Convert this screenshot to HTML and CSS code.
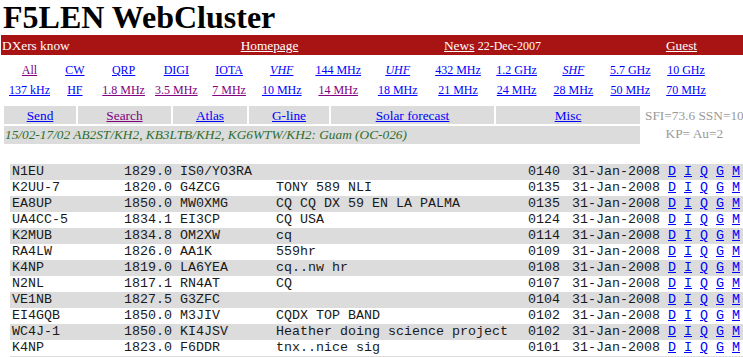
FILE: index.html
```html
<!DOCTYPE html>
<html lang="en">
<head>
<meta charset="utf-8">
<title>F5LEN WebCluster</title>
<link rel="stylesheet" href="styles.css">
</head>
<body>
<h1 class="title">F5LEN WebCluster</h1>

<div class="topbar">
  <div class="tb-cell tb-left">DXers know</div>
  <div class="tb-cell tb-center"><a href="#">Homepage</a></div>
  <div class="tb-cell tb-center"><a href="#">News</a> <span class="tb-date">22-Dec-2007</span></div>
  <div class="tb-cell tb-center"><a href="#">Guest</a></div>
</div>

<nav class="bands">
  <span class="band"><a class="visited" href="#">All</a></span>
  <span class="band"><a href="#">CW</a></span>
  <span class="band"><a href="#">QRP</a></span>
  <span class="band"><a href="#">DIGI</a></span>
  <span class="band"><a href="#">IOTA</a></span>
  <span class="band"><a class="it" href="#">VHF</a></span>
  <span class="band"><a href="#">144 MHz</a></span>
  <span class="band"><a class="it" href="#">UHF</a></span>
  <span class="band"><a href="#">432 MHz</a></span>
  <span class="band"><a href="#">1.2 GHz</a></span>
  <span class="band"><a class="it" href="#">SHF</a></span>
  <span class="band"><a href="#">5.7 GHz</a></span>
  <span class="band"><a href="#">10 GHz</a></span>

  <span class="band"><a href="#">137 kHz</a></span>
  <span class="band"><a href="#">HF</a></span>
  <span class="band"><a class="visited" href="#">1.8 MHz</a></span>
  <span class="band"><a class="visited" href="#">3.5 MHz</a></span>
  <span class="band"><a class="visited" href="#">7 MHz</a></span>
  <span class="band"><a href="#">10 MHz</a></span>
  <span class="band"><a class="visited" href="#">14 MHz</a></span>
  <span class="band"><a href="#">18 MHz</a></span>
  <span class="band"><a href="#">21 MHz</a></span>
  <span class="band"><a href="#">24 MHz</a></span>
  <span class="band"><a href="#">28 MHz</a></span>
  <span class="band"><a href="#">50 MHz</a></span>
  <span class="band"><a href="#">70 MHz</a></span>
</nav>

<div class="menu">
  <div class="menu-cell"><a href="#">Send</a></div>
  <div class="menu-cell"><a class="visited" href="#">Search</a></div>
  <div class="menu-cell"><a href="#">Atlas</a></div>
  <div class="menu-cell"><a href="#">G-line</a></div>
  <div class="menu-cell"><a href="#">Solar forecast</a></div>
  <div class="menu-cell"><a href="#">Misc</a></div>
  <div class="sfi">SFI=73.6 SSN=10<br>KP= Au=2</div>
  <div class="notice">15/02-17/02 AB2ST/KH2, KB3LTB/KH2, KG6WTW/KH2: Guam (OC-026)</div>
</div>

<div class="spots">
  <div class="spot"><span>N1EU</span><span>1829.0</span><span>IS0/YO3RA</span><span></span><span>0140</span><span>31-Jan-2008</span><span class="lk"><a href="#">D</a> <a href="#">I</a> <a href="#">Q</a> <a href="#">G</a> <a href="#">M</a></span></div>
  <div class="spot"><span>K2UU-7</span><span>1820.0</span><span>G4ZCG</span><span>TONY 589 NLI</span><span>0135</span><span>31-Jan-2008</span><span class="lk"><a href="#">D</a> <a href="#">I</a> <a href="#">Q</a> <a href="#">G</a> <a href="#">M</a></span></div>
  <div class="spot"><span>EA8UP</span><span>1850.0</span><span>MW0XMG</span><span>CQ CQ DX 59 EN LA PALMA</span><span>0135</span><span>31-Jan-2008</span><span class="lk"><a href="#">D</a> <a href="#">I</a> <a href="#">Q</a> <a href="#">G</a> <a href="#">M</a></span></div>
  <div class="spot"><span>UA4CC-5</span><span>1834.1</span><span>EI3CP</span><span>CQ USA</span><span>0124</span><span>31-Jan-2008</span><span class="lk"><a href="#">D</a> <a href="#">I</a> <a href="#">Q</a> <a href="#">G</a> <a href="#">M</a></span></div>
  <div class="spot"><span>K2MUB</span><span>1834.8</span><span>OM2XW</span><span>cq</span><span>0114</span><span>31-Jan-2008</span><span class="lk"><a href="#">D</a> <a href="#">I</a> <a href="#">Q</a> <a href="#">G</a> <a href="#">M</a></span></div>
  <div class="spot"><span>RA4LW</span><span>1826.0</span><span>AA1K</span><span>559hr</span><span>0109</span><span>31-Jan-2008</span><span class="lk"><a href="#">D</a> <a href="#">I</a> <a href="#">Q</a> <a href="#">G</a> <a href="#">M</a></span></div>
  <div class="spot"><span>K4NP</span><span>1819.0</span><span>LA6YEA</span><span>cq..nw hr</span><span>0108</span><span>31-Jan-2008</span><span class="lk"><a href="#">D</a> <a href="#">I</a> <a href="#">Q</a> <a href="#">G</a> <a href="#">M</a></span></div>
  <div class="spot"><span>N2NL</span><span>1817.1</span><span>RN4AT</span><span>CQ</span><span>0107</span><span>31-Jan-2008</span><span class="lk"><a href="#">D</a> <a href="#">I</a> <a href="#">Q</a> <a href="#">G</a> <a href="#">M</a></span></div>
  <div class="spot"><span>VE1NB</span><span>1827.5</span><span>G3ZFC</span><span></span><span>0104</span><span>31-Jan-2008</span><span class="lk"><a href="#">D</a> <a href="#">I</a> <a href="#">Q</a> <a href="#">G</a> <a href="#">M</a></span></div>
  <div class="spot"><span>EI4GQB</span><span>1850.0</span><span>M3JIV</span><span>CQDX TOP BAND</span><span>0102</span><span>31-Jan-2008</span><span class="lk"><a href="#">D</a> <a href="#">I</a> <a href="#">Q</a> <a href="#">G</a> <a href="#">M</a></span></div>
  <div class="spot"><span>WC4J-1</span><span>1850.0</span><span>KI4JSV</span><span>Heather doing science project</span><span>0102</span><span>31-Jan-2008</span><span class="lk"><a href="#">D</a> <a href="#">I</a> <a href="#">Q</a> <a href="#">G</a> <a href="#">M</a></span></div>
  <div class="spot"><span>K4NP</span><span>1823.0</span><span>F6DDR</span><span>tnx..nice sig</span><span>0101</span><span>31-Jan-2008</span><span class="lk"><a href="#">D</a> <a href="#">I</a> <a href="#">Q</a> <a href="#">G</a> <a href="#">M</a></span></div>
  <div class="spot"><span>&nbsp;</span><span></span><span></span><span></span><span></span><span></span><span></span></div>
</div>
</body>
</html>
```
FILE: styles.css
```css
body {
  margin: 0;
  background: #ffffff;
  color: #000000;
  font-family: "Liberation Serif", "Times New Roman", serif;
  font-size: 13.333px;
}

a {
  color: #0000ff;
  text-decoration: underline;
}

a.visited {
  color: #800080;
}

a.it {
  font-style: italic;
}

.title {
  margin: 0 0 -0.5px;
  padding-left: 3px;
  font-size: 32px;
  line-height: 35.5px;
  font-weight: bold;
}

.topbar {
  margin-left: 1px;
  height: 20px;
  background: #a81414;
  color: #ffffff;
  display: grid;
  grid-template-columns: 199px 139px 307px 71px 1fr;
  line-height: 16px;
  white-space: nowrap;
}

.tb-cell {
  padding-top: 3px;
}

.tb-left {
  padding-left: 1px;
}

.tb-center {
  text-align: center;
}

.topbar a {
  color: #ffffff;
}

.tb-date {
  font-size: 12px;
}

.bands {
  margin: 5px 0 0 7.25px;
  display: grid;
  grid-template-columns: 44.5px 46.25px 51.25px 54.25px 51.25px 54px 59px 60px 60.5px 56.75px 56.75px 57px 54.5px;
  font-size: 12px;
  line-height: 16px;
  white-space: nowrap;
}

.band {
  padding: 2px 0;
  text-align: center;
}

.menu {
  margin: 6px 0 0 4px;
  display: grid;
  grid-template-columns: 72px 93px 74px 80px 163px 144px 1fr;
  grid-template-rows: 18px 18px;
  gap: 2px;
  line-height: 16px;
  white-space: nowrap;
}

.menu-cell {
  background: #dcdcdc;
  text-align: center;
  padding-top: 2px;
}

.notice {
  grid-column: 1 / 7;
  grid-row: 2;
  background: #dcdcdc;
  color: #2f6e2f;
  font-style: italic;
  padding: 1px 0 0 1px;
}

.sfi {
  grid-column: 7;
  grid-row: 1 / 3;
  color: #999999;
  text-align: center;
  line-height: 18px;
  padding: 1px 0 0 3px;
}

.spots {
  margin: 20px 0 0 10px;
  font-family: "Liberation Mono", "Courier New", monospace;
  font-size: 13.333px;
  line-height: 16px;
  color: #1a1a1a;
}

.spot {
  display: grid;
  grid-template-columns: 114px 56px 96px 252px 44px 96px 1fr;
  white-space: pre;
  height: 16px;
}

.spot:nth-child(odd) {
  background: #dcdcdc;
}

.spot > span:first-child {
  padding-left: 2px;
}
```
